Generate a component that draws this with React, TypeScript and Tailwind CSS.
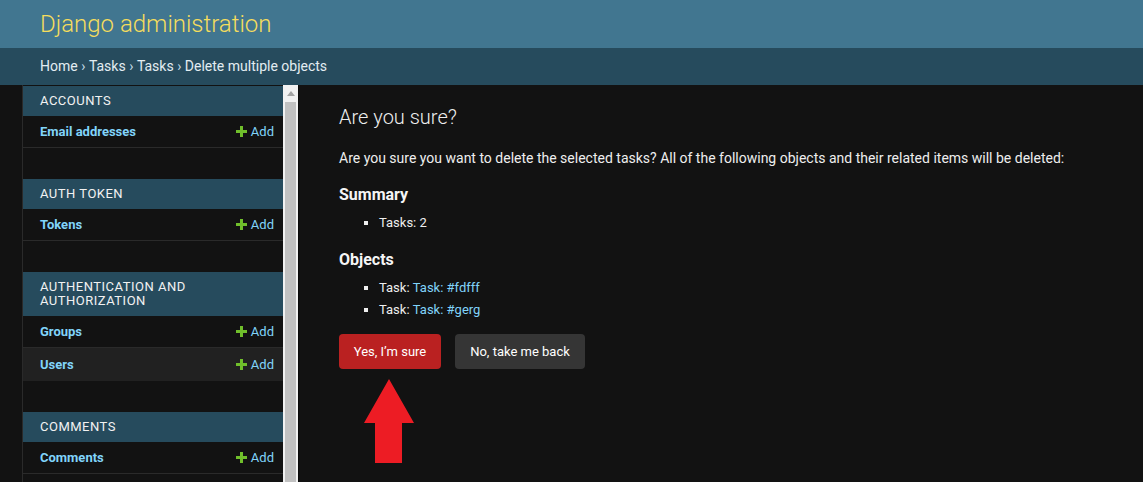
import React from "react";

type Row = { name: string; hover?: boolean };
type Module = { caption: string[]; rows: Row[] };

const modules: Module[] = [
  { caption: ["Accounts"], rows: [{ name: "Email addresses" }] },
  { caption: ["Auth Token"], rows: [{ name: "Tokens" }] },
  {
    caption: ["Authentication and", "Authorization"],
    rows: [{ name: "Groups" }, { name: "Users", hover: true }],
  },
  { caption: ["Comments"], rows: [{ name: "Comments" }] },
];

function PlusIcon() {
  return (
    <svg width="11" height="11" viewBox="0 0 11 11" className="shrink-0">
      <path d="M4 0h3v4h4v3H7v4H4V7H0V4h4z" fill="#70bf2b" />
    </svg>
  );
}

function SideModule({ mod }: { mod: Module }) {
  return (
    <div className="mb-[31px]">
      <div className="bg-[#264b5d] px-[17px] py-[8px] text-[13px] leading-[14px] tracking-[0.5px] uppercase text-[#f2f2f2]">
        {mod.caption.map((c) => (
          <div key={c}>{c}</div>
        ))}
      </div>
      {mod.rows.map((r) => (
        <div
          key={r.name}
          className={
            r.hover
              ? "flex items-center justify-between pl-[17px] pr-[9px] py-[8px] h-[33px] bg-[#212121] text-[13px] leading-[15px]"
              : "flex items-center justify-between pl-[17px] pr-[9px] py-[8px] h-[32px] border-b border-[#2a2a2a] text-[13px] leading-[15px]"
          }
        >
          <span className="font-bold text-[#81d4fa]">{r.name}</span>
          <span className="flex items-center gap-[4px] text-[#81d4fa]">
            <PlusIcon />
            Add
          </span>
        </div>
      ))}
    </div>
  );
}

function Bullet({ children }: { children: React.ReactNode }) {
  return (
    <li className="flex items-center h-[22px] pl-[25px] text-[13px] text-[#eeeeee]">
      <span className="w-[4px] h-[4px] bg-[#eeeeee] mr-[11px]" />
      {children}
    </li>
  );
}

export default function App() {
  return (
    <div
      className="w-[1143px] h-[482px] overflow-hidden bg-[#121212] flex flex-col"
      style={{ fontFamily: "Roboto, 'Liberation Sans', sans-serif" }}
    >
      <header className="h-[48px] bg-[#417690] flex items-center px-[40px]">
        <span className="text-[24px] font-light text-[#f5dd5d] leading-none">Django administration</span>
      </header>
      <div className="h-[37px] bg-[#264b5d] flex items-center px-[40px] text-[14px] text-[#e3edf2]">
        Home <span className="px-[3.5px] text-[#c4dce8]">›</span> Tasks{" "}
        <span className="px-[3.5px] text-[#c4dce8]">›</span> Tasks{" "}
        <span className="px-[3.5px] text-[#c4dce8]">›</span> Delete multiple objects
      </div>

      <div className="flex flex-1 min-h-0">
        <div className="w-[23px] shrink-0 border-r border-[#2a2a2a]" />
        <nav className="w-[260px] shrink-0 pt-px overflow-hidden">
          {modules.map((m) => (
            <SideModule key={m.caption.join()} mod={m} />
          ))}
        </nav>
        <div className="w-[15px] shrink-0 bg-[#f1f1f1] flex flex-col">
          <div className="h-[17px] flex items-center justify-center">
            <svg width="8" height="5" viewBox="0 0 8 5">
              <path d="M0 5L4 0l4 5z" fill="#a3a3a3" />
            </svg>
          </div>
          <div className="flex-1 mx-[2px] bg-[#c1c1c1]" />
        </div>
        <div className="w-px shrink-0 bg-[#0b0b0b]" />

        <main className="relative flex-1 px-[40px] pt-[20px]">
          <h1 className="text-[20px] font-light leading-[24px] text-[#eeeeee] mb-[19px]">Are you sure?</h1>
          <p className="text-[14px] leading-[20px] text-[#eeeeee] mb-[17px]">
            Are you sure you want to delete the selected tasks? All of the following objects and their related items
            will be deleted:
          </p>
          <h2 className="text-[16px] font-bold leading-[20px] text-[#f5f5f5] mb-[7px]">Summary</h2>
          <ul className="mb-[16px]">
            <Bullet>Tasks: 2</Bullet>
          </ul>
          <h2 className="text-[16px] font-bold leading-[20px] text-[#f5f5f5] mb-[7px]">Objects</h2>
          <ul>
            <Bullet>
              Task:&nbsp;<span className="text-[#81d4fa]">Task: #fdfff</span>
            </Bullet>
            <Bullet>
              Task:&nbsp;<span className="text-[#81d4fa]">Task: #gerg</span>
            </Bullet>
          </ul>
          <div className="flex gap-[14px] mt-[13px]">
            <button className="w-[102px] h-[35px] rounded-[4px] bg-[#ba2121] text-white text-[13px]">
              Yes, I’m sure
            </button>
            <button className="w-[130px] h-[35px] rounded-[4px] bg-[#353535] text-white text-[13px]">
              No, take me back
            </button>
          </div>

          <svg
            className="absolute left-[65px] top-[294px]"
            width="50"
            height="85"
            viewBox="0 0 50 85"
          >
            <path d="M25 0L50 44H38V84H11V44H0z" fill="#ed1c24" />
          </svg>
        </main>
      </div>
    </div>
  );
}
